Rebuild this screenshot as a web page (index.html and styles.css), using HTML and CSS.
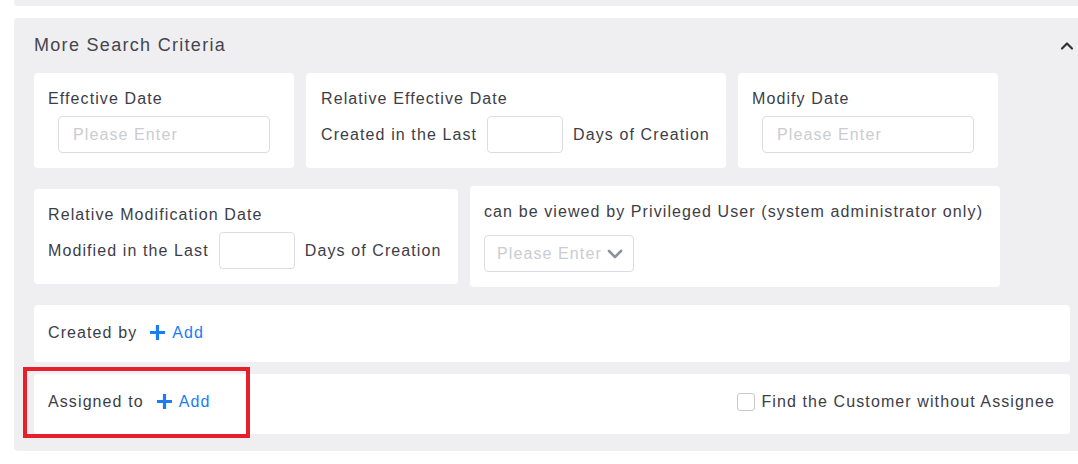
FILE: index.html
```html
<html lang="en">
<head>
  <meta charset="UTF-8">
  <meta name="viewport" content="width=device-width, initial-scale=1.0">
  <title>More Search Criteria</title>
  <link rel="stylesheet" href="styles.css">
</head>
<body>
  <div class="panel-tail"></div>

  <div class="panel">
    <div class="panel-header">
      <span class="panel-title">More Search Criteria</span>
      <svg class="collapse-icon" width="14" height="10" viewBox="0 0 14 10">
        <path d="M2 7.5 L7 2.5 L12 7.5" fill="none" stroke="#333" stroke-width="2.2" stroke-linecap="round" stroke-linejoin="round"/>
      </svg>
    </div>

    <div class="row">
      <div class="card card-date">
        <div class="label">Effective Date</div>
        <div class="input input-wide"><span class="placeholder">Please Enter</span></div>
      </div>
      <div class="card card-rel">
        <div class="label">Relative Effective Date</div>
        <div class="inline">
          <span>Created in the Last</span>
          <div class="input input-small"></div>
          <span>Days of Creation</span>
        </div>
      </div>
      <div class="card card-date">
        <div class="label">Modify Date</div>
        <div class="input input-wide"><span class="placeholder">Please Enter</span></div>
      </div>
    </div>

    <div class="row row-center">
      <div class="card card-relmod">
        <div class="label">Relative Modification Date</div>
        <div class="inline">
          <span>Modified in the Last</span>
          <div class="input input-small"></div>
          <span>Days of Creation</span>
        </div>
      </div>
      <div class="card card-priv">
        <div class="label label-gap">can be viewed by Privileged User (system administrator only)</div>
        <div class="input input-select">
          <span class="placeholder">Please Enter</span>
          <svg width="16" height="10" viewBox="0 0 16 10">
            <path d="M2 2 L8 8 L14 2" fill="none" stroke="#8e929c" stroke-width="2.6" stroke-linecap="round" stroke-linejoin="round"/>
          </svg>
        </div>
      </div>
    </div>

    <div class="bar bar-created">
      <span>Created by</span>
      <a class="add-link">
        <svg width="15" height="15" viewBox="0 0 15 15">
          <path d="M7.5 0 V15 M0 7.5 H15" stroke="#1c7cf2" stroke-width="3.2"/>
        </svg>
        Add
      </a>
    </div>

    <div class="bar bar-assigned">
      <div class="highlight"></div>
      <span>Assigned to</span>
      <a class="add-link">
        <svg width="15" height="15" viewBox="0 0 15 15">
          <path d="M7.5 0 V15 M0 7.5 H15" stroke="#1c7cf2" stroke-width="3.2"/>
        </svg>
        Add
      </a>
      <label class="check">
        <span class="check-box"></span>
        Find the Customer without Assignee
      </label>
    </div>
  </div>
</body>
</html>
```

FILE: styles.css
```css
body {
  margin: 0;
  padding: 0;
  overflow: hidden;
  background: #fff;
  font-family: "Liberation Sans", Arial, sans-serif;
  font-size: 16px;
  letter-spacing: 1.1px;
  color: #3d3d47;
}
.panel-tail {
  height: 6px;
  margin: 0 -12px 0 14px;
  background: #efeff1;
  border-radius: 0 0 4px 4px;
}
.panel {
  margin: 12px -12px 0 14px;
  padding: 0 20px 17px;
  background: #efeff1;
  border-radius: 4px;
}
.panel-header {
  height: 55px;
  display: flex;
  align-items: center;
  justify-content: space-between;
}
.panel-title {
  font-size: 18px;
  letter-spacing: 1.3px;
  color: #454550;
}
.collapse-icon {
  margin-right: -4px;
}
.row {
  display: flex;
  gap: 12px;
  margin-bottom: 18px;
}
.row-center {
  align-items: center;
}
.card {
  background: #fff;
  border-radius: 4px;
  padding: 14px 14px 15px;
  box-sizing: border-box;
}
.card-date {
  width: 260px;
}
.card-rel {
  width: 420px;
  padding-left: 15px;
}
.card-relmod {
  width: 424px;
}
.card-priv {
  width: 530px;
}
.label {
  line-height: 24px;
  margin-bottom: 5px;
  white-space: nowrap;
}
.label-gap {
  margin-bottom: 11px;
}
.inline {
  display: flex;
  align-items: center;
  gap: 10px;
  white-space: nowrap;
}
.input {
  height: 37px;
  box-sizing: border-box;
  border: 1px solid #dcdde2;
  border-radius: 4px;
  background: #fff;
  display: flex;
  align-items: center;
}
.input-wide {
  width: 212px;
  margin-left: 10px;
  padding-left: 14px;
}
.input-small {
  width: 76px;
}
.input-select {
  width: 150px;
  padding: 0 10px 0 12px;
  justify-content: space-between;
}
.placeholder {
  color: #cbccd1;
  white-space: nowrap;
}
.bar {
  position: relative;
  display: flex;
  align-items: center;
  background: #fff;
  border-radius: 4px;
  padding: 0 15px 0 14px;
  box-sizing: border-box;
}
.bar-created {
  height: 57px;
  padding-bottom: 2px;
  margin-bottom: 12px;
}
.bar-assigned {
  height: 60px;
  padding-bottom: 5px;
}
.add-link {
  display: flex;
  align-items: center;
  gap: 7px;
  margin-left: 13px;
  color: #1c7cf2;
  cursor: pointer;
}
.check {
  margin-left: auto;
  display: flex;
  align-items: center;
  gap: 6px;
}
.check-box {
  width: 18px;
  height: 18px;
  box-sizing: border-box;
  border: 1px solid #c8c9ce;
  border-radius: 3px;
  background: #fff;
}
.highlight {
  position: absolute;
  left: -11px;
  top: -7px;
  width: 227px;
  height: 71px;
  box-sizing: border-box;
  border: 4px solid #e61f2a;
  pointer-events: none;
}
```
